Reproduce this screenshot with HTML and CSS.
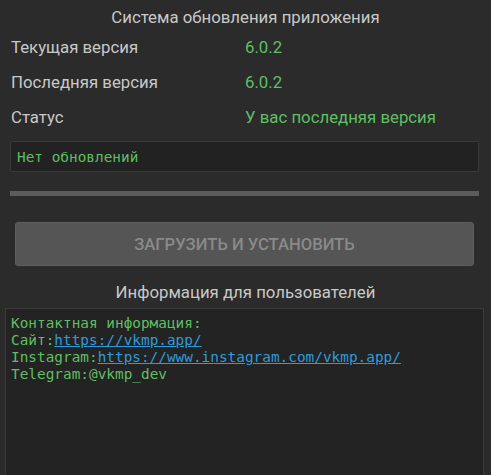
FILE: index.html
```html
<!DOCTYPE html>
<html lang="ru">
<head>
    <meta charset="UTF-8">
    <meta name="viewport" content="width=device-width, initial-scale=1.0">
    <title>Обновление</title>
    <link rel="stylesheet" href="styles.css">
</head>
<body>
    <div class="updater">
        <h2 class="section-title">Система обновления приложения</h2>
        <div class="info-row">
            <span class="label">Текущая версия</span>
            <span class="value">6.0.2</span>
        </div>
        <div class="info-row">
            <span class="label">Последняя версия</span>
            <span class="value">6.0.2</span>
        </div>
        <div class="info-row">
            <span class="label">Статус</span>
            <span class="value">У вас последняя версия</span>
        </div>

        <div class="log-field">Нет обновлений</div>

        <div class="progress"><div class="progress-fill" style="width: 0%"></div></div>

        <button class="install-btn" disabled>Загрузить и установить</button>

        <h2 class="section-title info-title">Информация для пользователей</h2>
        <div class="contacts">
            <div>Контактная информация:</div>
            <div>Сайт:<a href="https://vkmp.app/">https://vkmp.app/</a></div>
            <div>Instagram:<a href="https://www.instagram.com/vkmp.app/">https://www.instagram.com/vkmp.app/</a></div>
            <div>Telegram:<span class="handle">@vkmp_dev</span></div>
        </div>
    </div>
</body>
</html>
```

FILE: styles.css
```css
html, body {
    height: 100%;
}

body {
    margin: 0;
    background-color: #2b2b2b;
    font-family: Roboto, "Noto Sans", sans-serif;
    color: #c8c8c8;
    overflow: hidden;
}

.updater {
    display: flex;
    flex-direction: column;
    height: 100%;
}

.section-title {
    margin: 0;
    height: 35px;
    line-height: 35px;
    font-size: 16.8px;
    font-weight: normal;
    text-align: center;
    color: #c8c8c8;
}

.info-row {
    display: grid;
    grid-template-columns: 234px 1fr;
    padding-left: 11px;
    height: 35px;
    line-height: 24px;
    font-size: 16.8px;
}

.info-row .value {
    color: #5fbf63;
}

.log-field {
    margin: 1px 12px 0 10px;
    height: 29px;
    padding-left: 6px;
    line-height: 30px;
    background-color: #222222;
    border: 1px solid #3a3a3a;
    border-radius: 2px;
    font-family: "DejaVu Sans Mono", monospace;
    font-size: 14.4px;
    color: #5fbf63;
}

.progress {
    margin: 19px 12px 0 10px;
    height: 5px;
    background-color: #5c5c5c;
}

.progress-fill {
    height: 100%;
    background-color: #5fbf63;
}

.install-btn {
    margin: 26px 17px 0 15px;
    height: 44px;
    border: 1px solid #5e5e5e;
    border-radius: 3px;
    background-color: #555555;
    color: #8a8a8a;
    font-family: Roboto, sans-serif;
    font-size: 16.6px;
    font-weight: 500;
    text-transform: uppercase;
}

.info-title {
    margin-top: 9px;
    height: 33px;
    line-height: 34px;
}

.contacts {
    flex: 1;
    margin: 0 7px 0 5px;
    padding: 6px 5px;
    background-color: #232323;
    border: 1px solid #3a3a3a;
    border-bottom: none;
    font-family: "DejaVu Sans Mono", monospace;
    font-size: 14.4px;
    line-height: 17px;
    color: #5fbf63;
}

.contacts a {
    color: #2d9bdc;
}

.contacts .handle {
    color: #5fbf63;
}
```
